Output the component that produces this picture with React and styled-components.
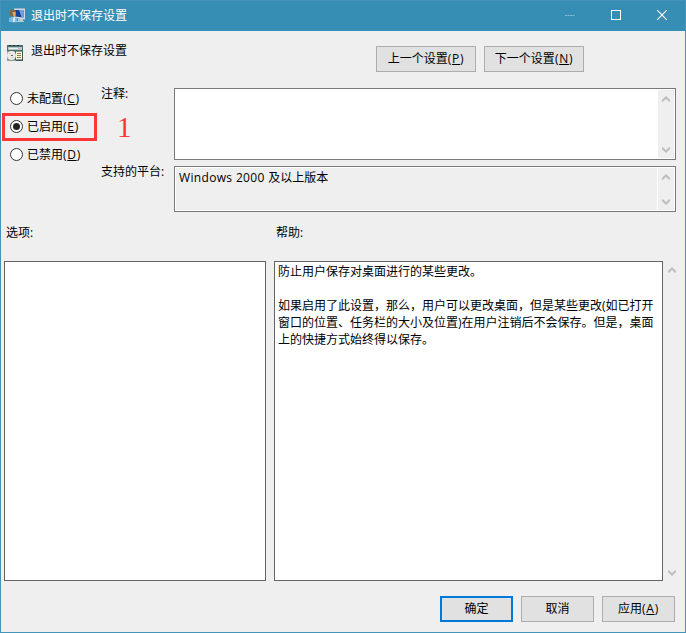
import React, { useState } from 'react';
import styled, { createGlobalStyle, css } from 'styled-components';

const GlobalStyle = createGlobalStyle`
  * {
    box-sizing: border-box;
  }

  body {
    margin: 0;
    font-family: 'Open Sans', 'Noto Sans CJK SC', sans-serif;
    font-size: 12px;
    line-height: 17px;
    color: #000000;
  }
`;

const Window = styled.div`
  display: flex;
  flex-direction: column;
  width: 686px;
  height: 633px;
  background-color: #efefef;
  border: 1px solid #4494ba;
  border-top: none;
  overflow: hidden;
`;

const TitleBar = styled.div`
  display: flex;
  align-items: center;
  height: 31px;
  flex: none;
  padding-left: 8px;
  background-color: #368eb5;
  border-top: 1px solid #4494ba;
  color: #ffffff;
`;

const WindowTitle = styled.span`
  flex: 1;
  margin: -2px 0 0 5px;
`;

const WindowButton = styled.div`
  display: flex;
  align-items: center;
  justify-content: center;
  width: 46px;
  height: 30px;
  padding-bottom: 2px;
`;

const Header = styled.div`
  display: flex;
  height: 57px;
  padding: 15px 0 0 6px;
`;

const PolicyIcon = styled.div`
  width: 16px;
  height: 16px;
  margin: -1px 8px 0 0;
`;

const PolicyName = styled.span`
  width: 345px;
  margin-top: -4px;
`;

const Button = styled.button`
  width: ${(props) => props.$width || 73}px;
  height: 26px;
  padding: 0;
  margin-right: 8px;
  background-color: #e1e1e1;
  border: ${(props) => (props.$primary ? '2px solid #0078d7' : '1px solid #adadad')};
  border-radius: 0;
  font: inherit;
  color: inherit;
  line-height: 22px;
`;

const Hotkey = styled.span`
  letter-spacing: 0.7px;
`;

const Settings = styled.div`
  display: grid;
  grid-template-columns: 99px 73px 502px;
  height: 124px;
  padding-left: 1px;
`;

const RadioGroup = styled.div`
  display: flex;
  flex-direction: column;
  margin-top: -3px;
`;

const RadioRow = styled.label`
  display: flex;
  align-items: center;
  width: 95px;
  height: 28px;
  padding: 0 0 1px 8px;

  ${(props) =>
    props.$marked &&
    css`
      padding: 0 0 1px 5px;
      border: 3px solid #fd3735;
    `}
`;

const RadioCircle = styled.span`
  display: flex;
  align-items: center;
  justify-content: center;
  width: 13px;
  height: 13px;
  margin-right: 4px;
  background-color: #ffffff;
  border: 1px solid #333333;
  border-radius: 50%;
`;

const RadioDot = styled.span`
  width: 7px;
  height: 7px;
  background-color: #222222;
  border-radius: 50%;
`;

const HiddenRadio = styled.input`
  display: none;
`;

const Labels = styled.div`
  display: flex;
  flex-direction: column;
`;

const NoteLabel = styled.span`
  height: 26px;
  margin-top: -3px;
`;

const StepNumber = styled.span`
  height: 52px;
  padding-left: 16px;
  font-family: 'Liberation Serif', serif;
  font-size: 29px;
  line-height: 33px;
  color: #fd3735;
`;

const Fields = styled.div`
  display: flex;
  flex-direction: column;
  gap: 6px;
`;

const Field = styled.div`
  display: flex;
  height: ${(props) => props.$height}px;
  padding: 1px;
  background-color: #ffffff;
  border: 1px solid #7a7a7a;
`;

const FieldText = styled.div`
  flex: 1;
  margin-right: 1px;
  padding: 1px 3px;
  background-color: ${(props) => (props.$readOnly ? '#efefef' : '#ffffff')};
`;

const Latin = styled.span`
  letter-spacing: 0.34px;
`;

const ScrollBar = styled.div`
  display: flex;
  flex-direction: column;
  justify-content: space-between;
  align-items: center;
  width: 16px;
  padding: 6px 0 5px;
  background-color: #efefef;
`;

const SectionLabels = styled.div`
  display: flex;
  height: 49px;
  padding: 12px 0 0 5px;
`;

const SectionLabel = styled.span`
  width: ${(props) => props.$width || 100}px;
`;

const Panels = styled.div`
  display: flex;
  height: 320px;
  padding-left: 3px;
`;

const Panel = styled.div`
  width: ${(props) => props.$width}px;
  margin-right: ${(props) => props.$gap}px;
  padding: 1px 3px;
  background-color: #ffffff;
  border: 1px solid #646464;
`;

const HelpText = styled.p`
  margin: 0 0 17px;
  white-space: pre;
`;

const Footer = styled.div`
  display: flex;
  justify-content: flex-end;
  padding: 15px 2px 0 0;
`;

const ComputerIcon = () => (
  <svg width="17" height="16" viewBox="0 0 17 16">
    <path d="M5 .5H16V11.5L5 10Z" fill="#d3dade" />
    <path d="M6 2H14.5V9.5L6 8.5Z" fill="#12409a" />
    <path d="M10 2h4.5v7.5L12.5 9Z" fill="#6f9fe0" />
    <path d="M9 11h5v2H9ZM8 13h7v1H8Z" fill="#b9c9d0" />
    <circle cx="3.8" cy="5" r="3.4" fill="#8a673f" />
    <path d="M3.5 4h3v4.5h-2Z" fill="#dcab6c" />
    <path d="M0 14V10.5L3 8.5 8 11v3.5Z" fill="#7dbbe4" />
    <path d="M4 9.5h2V14H4Z" fill="#d5edf7" />
  </svg>
);

const SettingIcon = () => (
  <svg width="16" height="16" viewBox="0 0 16 16" shapeRendering="crispEdges">
    <path d="M0 0h16v16H0Z" fill="#48706f" />
    <path d="M1 2h14v3H1Z" fill="#b9c4c4" />
    <path d="M2 3h9v1H2Z" fill="#eeeeea" />
    <path d="M2 0h2v1H2ZM6 0h2v1H6ZM10 0h2v1h-2Z" fill="#1f3536" />
    <path d="M0 6h16v10H0Z" fill="#8e9e94" />
    <path d="M9 7h6v7H9Z" fill="#fff8d5" />
    <path d="M10 8h4v1h-4ZM10 10h4v1h-4ZM10 12h4v1h-4Z" fill="#877e5d" />
    <path d="M8 6h1v9H8ZM15 6h1v10h-1ZM9 15h6v1H9Z" fill="#3d5d5b" />
    <circle cx="4.5" cy="10.5" r="4.5" fill="#ecebe6" shapeRendering="auto" />
    <path d="M4 10h2v1H4Z" fill="#526865" />
    <path d="M2 8h2v1H2ZM5 12h2v1H5Z" fill="#c5d3c6" />
  </svg>
);

const Chevron = ({ down }) => (
  <svg width="8" height="6" viewBox="0 0 8 6">
    <path
      d={down ? 'M0 .8 4 4.5 8 .8' : 'M0 5.2 4 1.5 8 5.2'}
      fill="none"
      stroke="#bfbfbf"
      strokeWidth="2.1"
    />
  </svg>
);

const Scroll = () => (
  <ScrollBar>
    <Chevron />
    <Chevron down />
  </ScrollBar>
);

const options = [
  { id: 'none', text: '未配置', hotkey: 'C' },
  { id: 'enabled', text: '已启用', hotkey: 'E', marked: true },
  { id: 'disabled', text: '已禁用', hotkey: 'D' },
];

const App = () => {
  const [state, setState] = useState('enabled');

  return (
    <Window>
      <GlobalStyle />
      <TitleBar>
        <ComputerIcon />
        <WindowTitle>退出时不保存设置</WindowTitle>
        <WindowButton>
          <svg width="10" height="1">
            <path d="M0 .5h10" stroke="#86bad2" strokeDasharray="2 .5" />
          </svg>
        </WindowButton>
        <WindowButton>
          <svg width="10" height="10">
            <rect x=".5" y=".5" width="9" height="9" fill="none" stroke="#ffffff" />
          </svg>
        </WindowButton>
        <WindowButton>
          <svg width="10" height="10">
            <path d="M0 0 10 10M10 0 0 10" stroke="#ffffff" strokeWidth="1.2" />
          </svg>
        </WindowButton>
      </TitleBar>

      <Header>
        <PolicyIcon>
          <SettingIcon />
        </PolicyIcon>
        <PolicyName>退出时不保存设置</PolicyName>
        <Button $width={100}>上一个设置<Hotkey>(<u>P</u>)</Hotkey></Button>
        <Button $width={100}>下一个设置<Hotkey>(<u>N</u>)</Hotkey></Button>
      </Header>

      <Settings>
        <RadioGroup>
          {options.map((option) => (
            <RadioRow key={option.id} $marked={option.marked}>
              <HiddenRadio
                type="radio"
                name="state"
                checked={state === option.id}
                onChange={() => setState(option.id)}
              />
              <RadioCircle>{state === option.id && <RadioDot />}</RadioCircle>
              <span>{option.text}<Hotkey>(<u>{option.hotkey}</u>)</Hotkey></span>
            </RadioRow>
          ))}
        </RadioGroup>
        <Labels>
          <NoteLabel>注释:</NoteLabel>
          <StepNumber>1</StepNumber>
          <span>支持的平台:</span>
        </Labels>
        <Fields>
          <Field $height={72}>
            <FieldText />
            <Scroll />
          </Field>
          <Field $height={46}>
            <FieldText $readOnly><Latin>Windows 2000 </Latin>及以上版本</FieldText>
            <Scroll />
          </Field>
        </Fields>
      </Settings>

      <SectionLabels>
        <SectionLabel $width={270}>选项:</SectionLabel>
        <SectionLabel>帮助:</SectionLabel>
      </SectionLabels>

      <Panels>
        <Panel $width={262} $gap={8} />
        <Panel $width={389} $gap={1}>
          <HelpText>防止用户保存对桌面进行的某些更改。</HelpText>
          <HelpText>
            {'如果启用了此设置，那么，用户可以更改桌面，但是某些更改(如已打开\n窗口的位置、任务栏的大小及位置)在用户注销后不会保存。但是，桌面\n上的快捷方式始终得以保存。'}
          </HelpText>
        </Panel>
        <Scroll />
      </Panels>

      <Footer>
        <Button $primary>确定</Button>
        <Button>取消</Button>
        <Button>应用<Hotkey>(<u>A</u>)</Hotkey></Button>
      </Footer>
    </Window>
  );
};

export default App;
